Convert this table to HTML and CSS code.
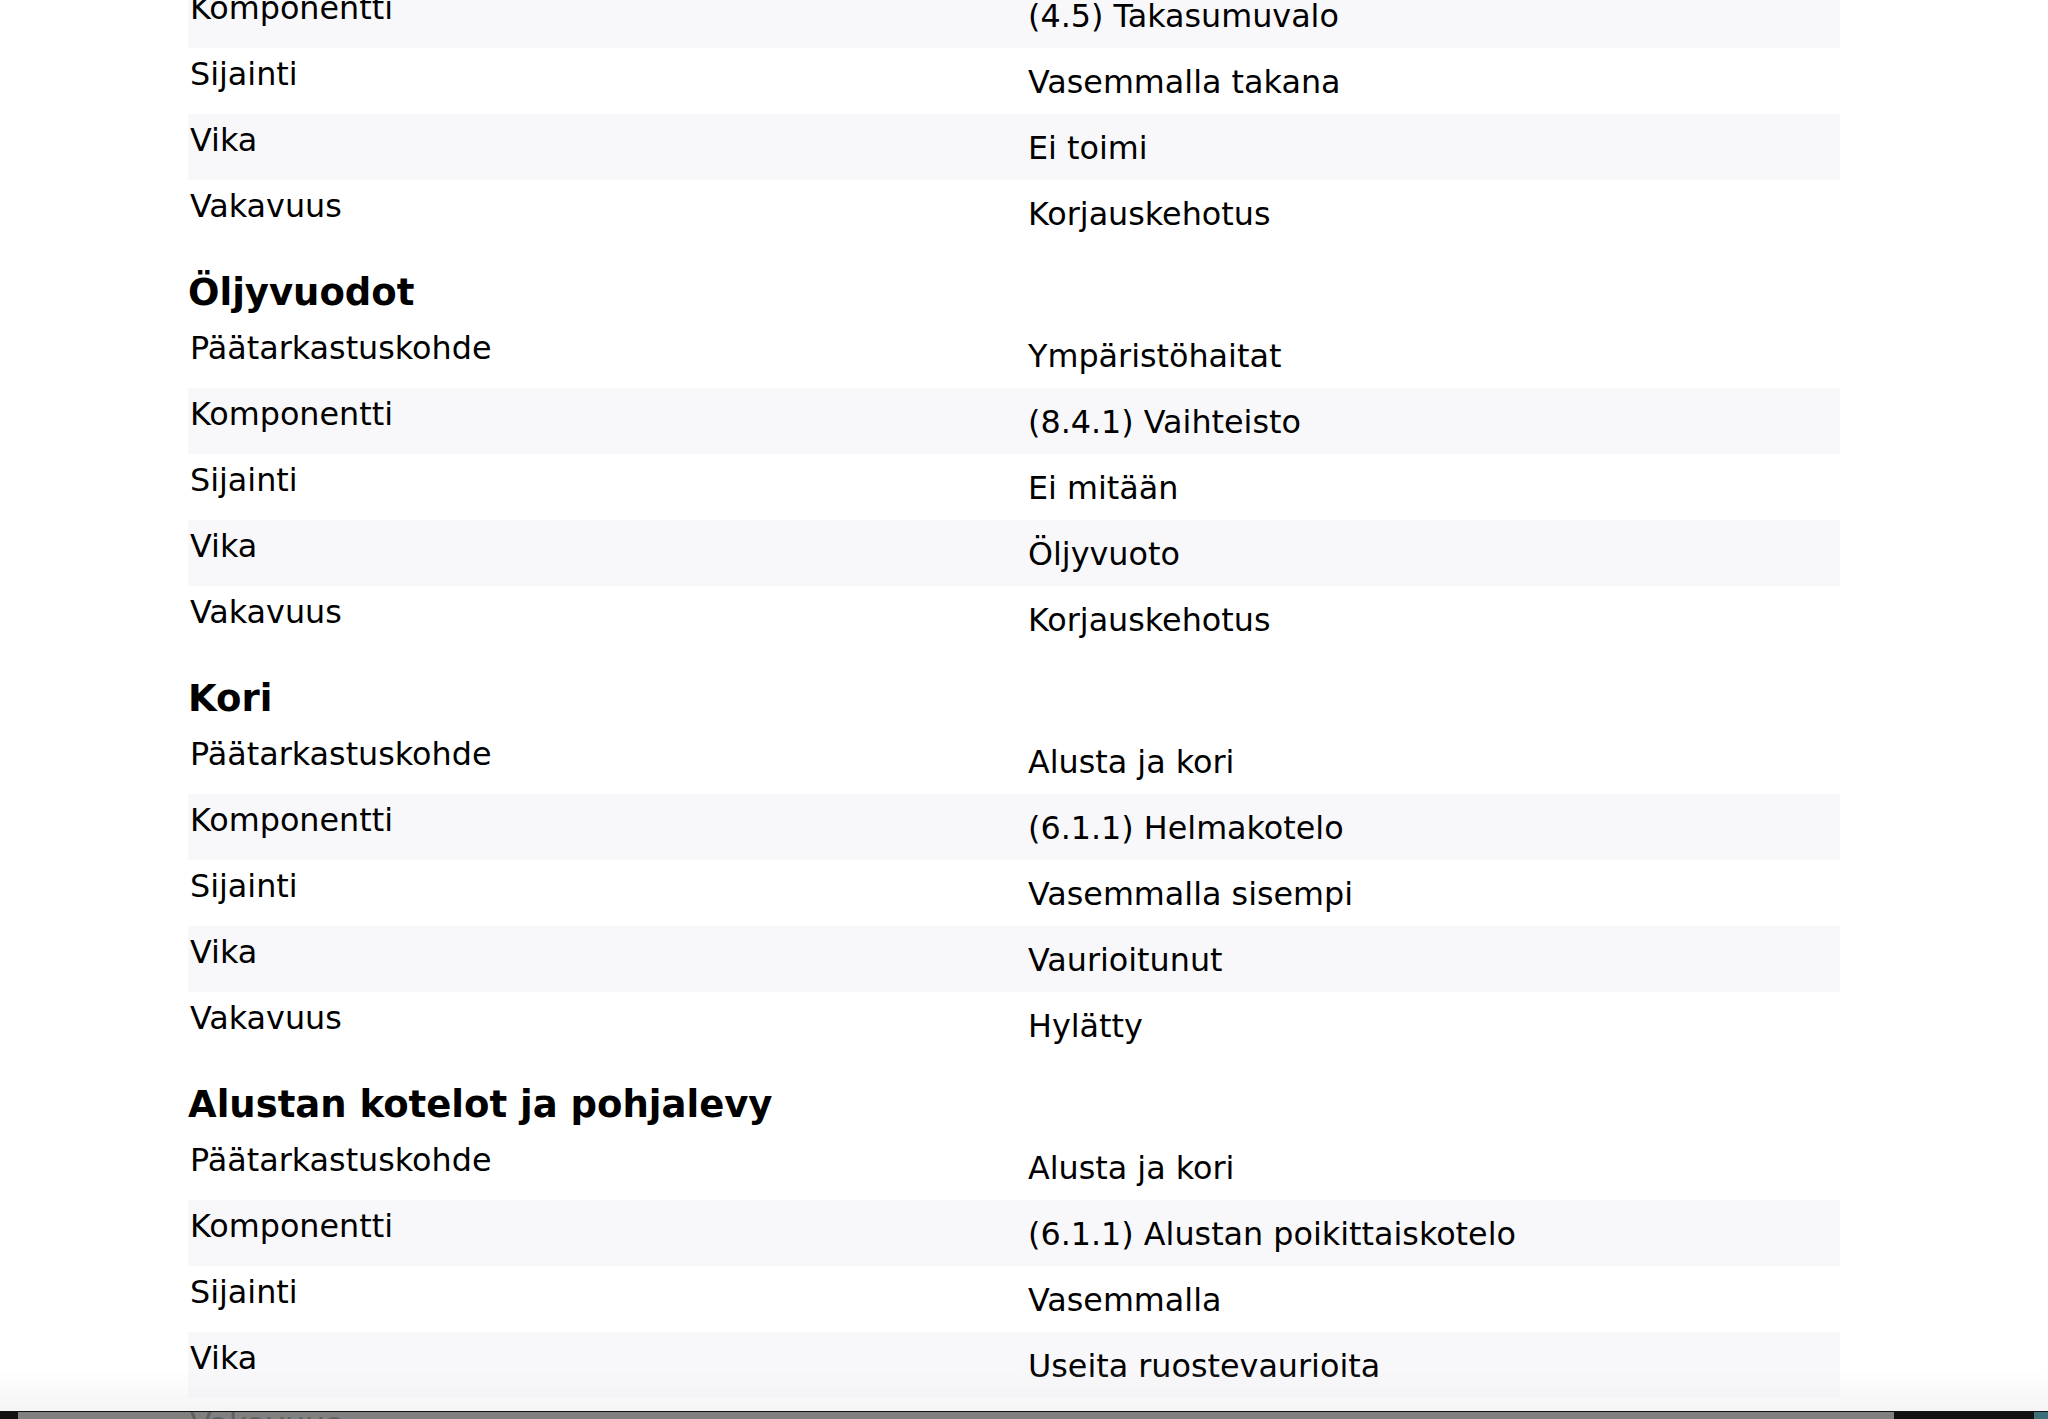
FILE: index.html
```html
<!DOCTYPE html>
<html lang="fi">
<head>
    <meta charset="UTF-8">
    <meta name="viewport" content="width=device-width, initial-scale=1.0">
    <title>Katsastuksen viat</title>
    <link rel="stylesheet" href="styles.css">
</head>
<body>
    <div class="report">
        <div class="defect first">
            <div class="row alt"><div class="label">Komponentti</div><div class="value">(4.5) Takasumuvalo</div></div>
            <div class="row"><div class="label">Sijainti</div><div class="value">Vasemmalla takana</div></div>
            <div class="row alt"><div class="label">Vika</div><div class="value">Ei toimi</div></div>
            <div class="row"><div class="label">Vakavuus</div><div class="value">Korjauskehotus</div></div>
        </div>

        <h3 class="defect-title">Öljyvuodot</h3>
        <div class="defect">
            <div class="row"><div class="label">Päätarkastuskohde</div><div class="value">Ympäristöhaitat</div></div>
            <div class="row alt"><div class="label">Komponentti</div><div class="value">(8.4.1) Vaihteisto</div></div>
            <div class="row"><div class="label">Sijainti</div><div class="value">Ei mitään</div></div>
            <div class="row alt"><div class="label">Vika</div><div class="value">Öljyvuoto</div></div>
            <div class="row"><div class="label">Vakavuus</div><div class="value">Korjauskehotus</div></div>
        </div>

        <h3 class="defect-title">Kori</h3>
        <div class="defect">
            <div class="row"><div class="label">Päätarkastuskohde</div><div class="value">Alusta ja kori</div></div>
            <div class="row alt"><div class="label">Komponentti</div><div class="value">(6.1.1) Helmakotelo</div></div>
            <div class="row"><div class="label">Sijainti</div><div class="value">Vasemmalla sisempi</div></div>
            <div class="row alt"><div class="label">Vika</div><div class="value">Vaurioitunut</div></div>
            <div class="row"><div class="label">Vakavuus</div><div class="value">Hylätty</div></div>
        </div>

        <h3 class="defect-title">Alustan kotelot ja pohjalevy</h3>
        <div class="defect">
            <div class="row"><div class="label">Päätarkastuskohde</div><div class="value">Alusta ja kori</div></div>
            <div class="row alt"><div class="label">Komponentti</div><div class="value">(6.1.1) Alustan poikittaiskotelo</div></div>
            <div class="row"><div class="label">Sijainti</div><div class="value">Vasemmalla</div></div>
            <div class="row alt"><div class="label">Vika</div><div class="value">Useita ruostevaurioita</div></div>
            <div class="row"><div class="label">Vakavuus</div><div class="value">Kyllä</div></div>
        </div>
    </div>

    <div class="bottom-fade"></div>
    <div class="bottom-bar">
        <span class="bar-edge"></span>
        <span class="bar-track"></span>
        <span class="bar-dark"></span>
        <span class="bar-end"></span>
    </div>
</body>
</html>
```
FILE: styles.css
```css
html, body {
    height: 100%;
}
body {
    margin: 0;
    padding: 0;
    background-color: #ffffff;
    color: #000000;
    font-family: "DejaVu Sans", Verdana, sans-serif;
    font-size: 31.8px;
    overflow: hidden;
}
.report {
    width: 1652px;
    margin-left: 188px;
}
.defect.first {
    margin-top: -18px;
}
.defect-title {
    margin: 0;
    font-size: 37px;
    font-weight: bold;
    line-height: 43px;
    padding: 25px 0 8px 0;
}
.row {
    display: grid;
    grid-template-columns: 838px 1fr;
    height: 66px;
    line-height: 36px;
}
.row.alt {
    background-color: #f8f8fa;
}
.label {
    padding: 8px 2px 0 2px;
}
.value {
    padding: 16px 2px 0 2px;
}
.bottom-fade {
    position: fixed;
    left: 0;
    right: 0;
    bottom: 8px;
    height: 40px;
    background: linear-gradient(to bottom, rgba(240, 240, 242, 0), rgba(240, 240, 242, 0.7));
}
.bottom-bar {
    position: fixed;
    left: 0;
    right: 0;
    bottom: 0;
    height: 7px;
    border-top: 1px solid #111111;
    display: flex;
}
.bar-edge {
    width: 18px;
    background-color: #111111;
}
.bar-track {
    flex: 1;
    background-color: rgba(110, 110, 110, 0.88);
}
.bar-dark {
    width: 140px;
    background-color: #121212;
}
.bar-end {
    width: 14px;
    background-color: #3d6f78;
}
```
